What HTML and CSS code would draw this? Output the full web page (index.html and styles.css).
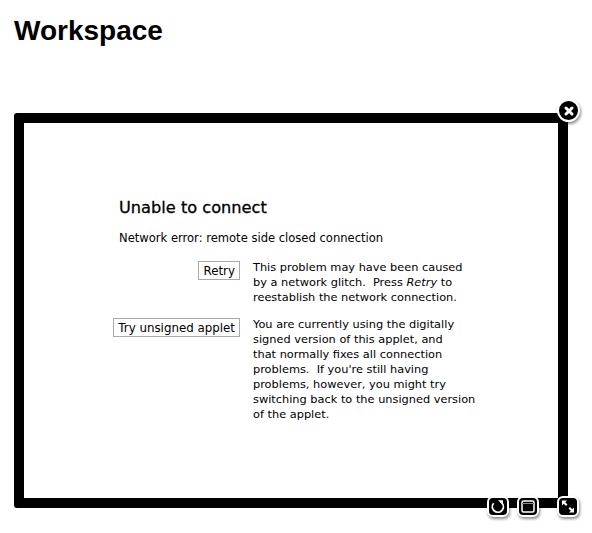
FILE: index.html
```html
<!DOCTYPE html>
<html lang="en">
<head>
<meta charset="UTF-8">
<meta name="viewport" content="width=device-width, initial-scale=1.0">
<title>Workspace</title>
<link rel="stylesheet" href="styles.css">
</head>
<body>
<h1 class="page-title">Workspace</h1>

<div class="frame">
  <div class="applet">
    <h2 class="applet-title">Unable to connect</h2>
    <p class="applet-error">Network error: remote side closed connection</p>
    <div class="options">
      <div class="option-action"><button class="btn" type="button">Retry</button></div>
      <p class="option-text">This problem may have been caused<br>by a network glitch.&nbsp; Press <em>Retry</em> to<br>reestablish the network connection.</p>
      <div class="option-action"><button class="btn" type="button">Try unsigned applet</button></div>
      <p class="option-text">You are currently using the digitally<br>signed version of this applet, and<br>that normally fixes all connection<br>problems.&nbsp; If you're still having<br>problems, however, you might try<br>switching back to the unsigned version<br>of the applet.</p>
    </div>
  </div>

  <!-- close -->
  <div class="ctl ctl-close">
    <svg width="14" height="14" viewBox="0 0 14 14"><path d="M4 4l6 6M10 4l-6 6" stroke="#fff" stroke-width="3" stroke-linecap="round" fill="none"/></svg>
  </div>
  <!-- bottom right controls -->
  <div class="ctl ctl-square ctl-reload">
    <svg width="16" height="15" viewBox="0 0 16 15"><path d="M3.6 4.2A5.5 5.5 0 1 0 11.9 4" stroke="#fff" stroke-width="1.8" fill="none"/><path d="M8 1.2L13 1.2L13 6.2z" fill="#fff"/></svg>
  </div>
  <div class="ctl ctl-square ctl-window">
    <svg width="16" height="15" viewBox="0 0 16 15"><rect x="2" y="2" width="12" height="11" rx="1.5" stroke="#fff" stroke-width="1.5" fill="none"/><path d="M2 4.5h12" stroke="#888" stroke-width="1"/></svg>
  </div>
  <div class="ctl ctl-square ctl-expand">
    <svg width="16" height="15" viewBox="0 0 16 15"><path d="M2 1.5h5L5.2 3.3 7.5 5.5 6 7 3.8 4.7 2 6.5zM14 13.5H9l1.8-1.8L8.5 9.5 10 8l2.2 2.3L14 8.5z" fill="#fff"/></svg>
  </div>
</div>
</body>
</html>
```

FILE: styles.css
```css
body {
  margin: 0;
  min-height: 100vh;
  background-color: #fff;
  color: #000;
  font-family: "DejaVu Sans", sans-serif;
}
.page-title {
  margin: 0;
  padding: 15px 0 0 14px;
  height: 113px;
  box-sizing: border-box;
  font-family: "Liberation Sans", Arial, sans-serif;
  font-size: 28px;
  line-height: 32px;
  font-weight: bold;
}
.frame {
  position: relative;
  box-sizing: border-box;
  width: 554px;
  height: 395px;
  margin-left: 14px;
  border: 10px solid #000;
  border-radius: 3px;
  background-color: #fff;
}
.applet {
  padding: 76px 0 0 89px;
  font-size: 11.35px;
  line-height: 15px;
}
.applet-title {
  margin: 0 0 0 6px;
  font-size: 16.2px;
  line-height: 18px;
  font-weight: 500;
  -webkit-text-stroke: 0.3px #000;
}
.applet-error {
  margin: 14px 0 0 6px;
  font-size: 11.55px;
}
.options {
  display: grid;
  grid-template-columns: 127px 1fr;
  column-gap: 13px;
  row-gap: 12px;
  margin-top: 14px;
}
.option-action {
  display: flex;
  justify-content: flex-end;
  align-items: flex-start;
}
.option-text {
  margin: 0;
  white-space: nowrap;
}
.btn {
  box-sizing: border-box;
  height: 19px;
  padding: 0 4px;
  border: 1px solid #aaa;
  background-color: #fff;
  color: #000;
  font-family: inherit;
  font-size: 11.85px;
  line-height: 16px;
  margin-top: 1px;
  white-space: nowrap;
}

/* controles sobre el marco */
.ctl {
  position: absolute;
  z-index: 2;
  box-sizing: border-box;
  display: flex;
  align-items: center;
  justify-content: center;
  background-color: #000;
  border: 2px solid #fff;
  box-shadow: 1px 2px 3px rgba(0, 0, 0, 0.45);
}
.ctl-close {
  top: -24px;
  right: -22px;
  width: 23px;
  height: 23px;
  border-radius: 50%;
}
.ctl-square {
  width: 22px;
  height: 21px;
  border-radius: 6px;
  bottom: -19px;
}
.ctl-reload { right: 49px; }
.ctl-window { right: 19px; }
.ctl-expand { right: -21px; }
```
